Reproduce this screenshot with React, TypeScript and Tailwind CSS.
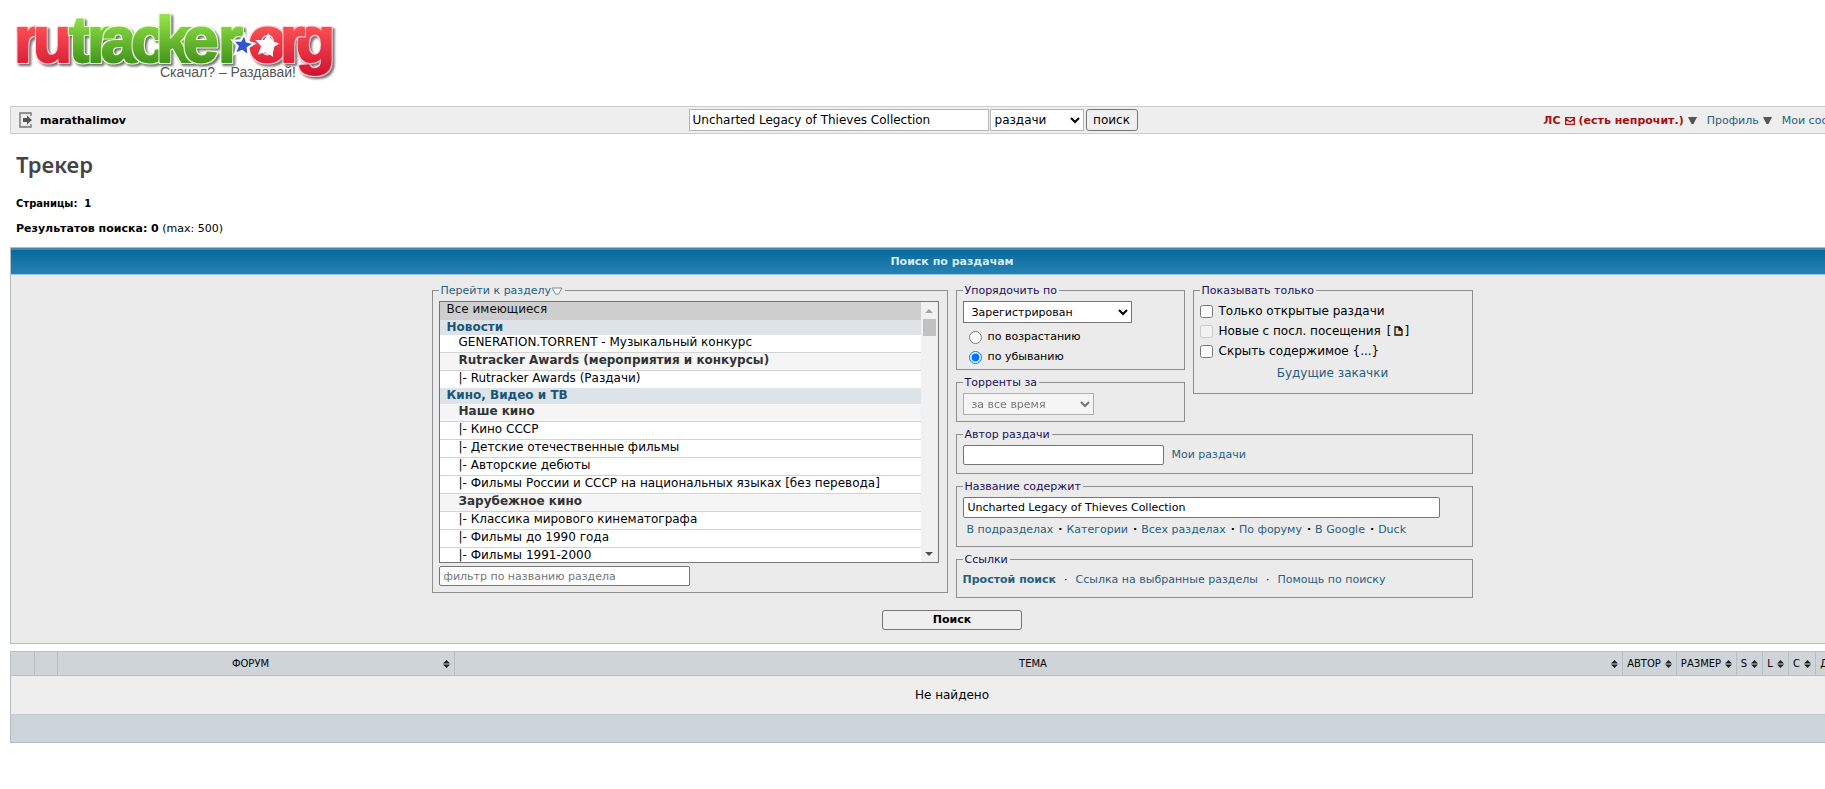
import React, { useState } from 'react';

interface ForumOption {
  name: string;
  root?: boolean;
}

interface ForumGroup {
  label: string;
  forums: ForumOption[];
}

const FORUM_GROUPS: ForumGroup[] = [
  {
    label: 'Новости',
    forums: [
      { name: 'GENERATION.TORRENT - Музыкальный конкурс' },
      { name: 'Rutracker Awards (мероприятия и конкурсы)', root: true },
      { name: '|- Rutracker Awards (Раздачи)' },
    ],
  },
  {
    label: 'Кино, Видео и ТВ',
    forums: [
      { name: 'Наше кино', root: true },
      { name: '|- Кино СССР' },
      { name: '|- Детские отечественные фильмы' },
      { name: '|- Авторские дебюты' },
      { name: '|- Фильмы России и СССР на национальных языках [без перевода]' },
      { name: 'Зарубежное кино', root: true },
      { name: '|- Классика мирового кинематографа' },
      { name: '|- Фильмы до 1990 года' },
      { name: '|- Фильмы 1991-2000' },
    ],
  },
];

const SEARCH_LINKS = ['В подразделах', 'Категории', 'Всех разделах', 'По форуму', 'В Google', 'Duck'];

// painted in this order, the last "r" lies over the "g"
const LOGO_LETTERS = [
  { x: 14, ch: 'r', color: 'red' },
  { x: 33, ch: 'u', color: 'red' },
  { x: 69, ch: 't', color: 'green' },
  { x: 87, ch: 'r', color: 'green' },
  { x: 101, ch: 'a', color: 'green' },
  { x: 131, ch: 'c', color: 'green' },
  { x: 156, ch: 'k', color: 'green' },
  { x: 183, ch: 'e', color: 'green' },
  { x: 218, ch: 'r', color: 'green' },
  { x: 248, ch: 'o', color: 'red' },
  { x: 296, ch: 'g', color: 'red' },
  { x: 280, ch: 'r', color: 'red' },
];

const STAR = 'M0 -11L3 -4L11 -3L5 2L7 10L0 6L-7 10L-5 2L-11 -3L-3 -4Z';

const Logo = () => (
  <svg width="340" height="84" viewBox="0 0 340 84" role="img" aria-label="rutracker.org">
    <defs>
      <linearGradient id="red" gradientUnits="userSpaceOnUse" x1="0" y1="26" x2="0" y2="76">
        <stop offset="0" stopColor="#fb5055" />
        <stop offset="1" stopColor="#cf1230" />
      </linearGradient>
      <linearGradient id="green" gradientUnits="userSpaceOnUse" x1="0" y1="14" x2="0" y2="64">
        <stop offset="0" stopColor="#97e54a" />
        <stop offset="1" stopColor="#41931c" />
      </linearGradient>
      {/* light rim round every letter */}
      <filter id="red-rim" x="-20%" y="-20%" width="140%" height="140%" colorInterpolationFilters="sRGB">
        <feMorphology in="SourceAlpha" operator="dilate" radius="1" result="fat" />
        <feFlood floodColor="#ffd0d8" />
        <feComposite in2="fat" operator="in" result="rim" />
        <feMerge><feMergeNode in="rim" /><feMergeNode in="SourceGraphic" /></feMerge>
      </filter>
      <filter id="green-rim" x="-20%" y="-20%" width="140%" height="140%" colorInterpolationFilters="sRGB">
        <feMorphology in="SourceAlpha" operator="dilate" radius="1" result="fat" />
        <feFlood floodColor="#eaffd6" />
        <feComposite in2="fat" operator="in" result="rim" />
        <feMerge><feMergeNode in="rim" /><feMergeNode in="SourceGraphic" /></feMerge>
      </filter>
      <filter id="shadow" x="-5%" y="-10%" width="110%" height="125%" colorInterpolationFilters="sRGB">
        <feDropShadow dx="2" dy="2" stdDeviation="1" floodColor="#333" floodOpacity=".7" />
      </filter>
    </defs>
    <g
      fontFamily="'Liberation Sans', Arial, sans-serif"
      fontWeight="700"
      fontSize="64"
      strokeWidth="2"
      strokeLinejoin="round"
      filter="url(#shadow)"
    >
      {LOGO_LETTERS.map((l, i) => (
        <text key={i} x={l.x} y={62} fill={`url(#${l.color})`} stroke={`url(#${l.color})`} filter={`url(#${l.color}-rim)`}>
          {l.ch}
        </text>
      ))}
    </g>
    <path d={STAR} transform="translate(243 45) rotate(8)" fill="#2e56d2" stroke="#fff" strokeWidth="2" />
    <path d={STAR} transform="translate(267 45) rotate(8)" fill="#fff" stroke="#fff" strokeWidth="1" />
    <text x="160" y="77" fontFamily="'Liberation Sans', Arial, sans-serif" fontSize="14" fill="#555">
      Скачал? – Раздавай!
    </text>
  </svg>
);

const LogoutIcon = () => (
  <svg width="14" height="16" viewBox="0 0 14 16" aria-hidden="true">
    <path d="M12 4V1H1v14h11v-3" fill="none" stroke="#777" strokeWidth="1.4" />
    <path d="M4 6h4V3.500L13 8l-5 4.500V10H4z" fill="#555" />
  </svg>
);

const MailIcon = () => (
  <svg width="10" height="8" viewBox="0 0 10 8" className="mx-1 inline-block" aria-hidden="true">
    <path d="M.7.7h8.600v6.600H.7zM1 2l4 3 4-3" fill="none" stroke="#a81010" strokeWidth="1.300" />
  </svg>
);

const ArrowDown = () => (
  <svg width="9" height="7" viewBox="0 0 9 7" aria-hidden="true">
    <path d="M0 0h9L5.500 7h-2z" fill="#555" />
  </svg>
);

const SortIcon = () => (
  <svg width="7" height="8" viewBox="0 0 7 8" className="mr-px ml-[3px] shrink-0" aria-hidden="true">
    <path d="M3.500 0L7 3.500H0zM0 4.500h7L3.500 8z" fill="#222" />
  </svg>
);

const Box = ({ title, className = '', children }: { title: React.ReactNode; className?: string; children: React.ReactNode }) => (
  <fieldset className={`min-w-0 border border-[#8f8f8f] pt-1 pl-1.5 ${className}`}>
    <legend className="px-0.5 text-[11px] leading-[13px] text-[#1a0f5c]">{title}</legend>
    {children}
  </fieldset>
);

const Link = ({ className = '', children }: { className?: string; children: React.ReactNode }) => (
  <a href="#" className={`text-[#275f82] ${className}`}>{children}</a>
);

const ForumSelect = () => {
  const [selected, setSelected] = useState<string[]>(['all']);

  return (
    <div className="flex h-[262px] border border-[#767676] bg-white">
      <select
        multiple
        aria-label="Раздел"
        value={selected}
        onChange={(e) => setSelected(Array.from(e.target.selectedOptions, (o) => o.value))}
        className="block h-full min-w-0 flex-1 overflow-hidden bg-white text-[12px] outline-none"
      >
        <option value="all" className="h-[18px] p-0 indent-[7px] leading-[17px]">Все имеющиеся</option>
        {FORUM_GROUPS.map((group) => (
          <optgroup
            key={group.label}
            label={group.label}
            className="bg-[#dee3e7] p-0 indent-[5px] leading-[17px] font-bold text-[#1a5478]"
          >
            {group.forums.map((forum, i) => (
              <option
                key={forum.name}
                value={forum.name}
                className={`p-0 indent-[19px] leading-[18px] ${forum.root ? 'bg-[#f5f5f5] font-bold text-[#333]' : 'bg-white font-normal text-black'} ${i < group.forums.length - 1 ? 'h-[18px] border-b border-[#d3d3d3]' : 'h-[17px]'}`}
              >
                {forum.name}
              </option>
            ))}
          </optgroup>
        ))}
      </select>
      <div className="flex w-[17px] flex-col items-center justify-between bg-[#f1f1f1] pb-[6px]" aria-hidden="true">
        <div className="flex flex-col items-center gap-[6px] pt-[7px]">
          <svg width="8" height="4" viewBox="0 0 8 4"><path d="M0 4l4-4 4 4z" fill="#a3a3a3" /></svg>
          <div className="h-[17px] w-[13px] bg-[#c1c1c1]" />
        </div>
        <svg width="8" height="4" viewBox="0 0 8 4"><path d="M0 0h8L4 4z" fill="#505050" /></svg>
      </div>
    </div>
  );
};

const TopBar = () => {
  const [query, setQuery] = useState('Uncharted Legacy of Thieves Collection');

  return (
    <div className="grid h-7 grid-cols-[36%_auto_1fr] items-center border border-[#ccc] bg-[#eee]">
      <div className="flex items-center gap-[7px] pl-2 font-bold">
        <LogoutIcon />
        <a href="#" className="pt-px text-black">marathalimov</a>
      </div>
      <form className="flex items-center gap-px text-[12px]" onSubmit={(e) => e.preventDefault()}>
        <input
          type="text"
          aria-label="Поиск"
          value={query}
          onChange={(e) => setQuery(e.target.value)}
          className="h-[22px] w-[300px] border border-[#b5b5b5] bg-white px-[3px]"
        />
        <select aria-label="Где искать" className="h-[22px] w-[94px] border border-[#b5b5b5] bg-white">
          <option>раздачи</option>
        </select>
        <button type="submit" className="ml-px h-[22px] w-[52px] rounded-[3px] border border-[#767676] bg-[#efefef]">поиск</button>
      </form>
      <nav className="flex items-center justify-end gap-1 pt-px pr-[7px] whitespace-nowrap">
        <a href="#" className="font-bold text-[#a81010]">
          ЛС<MailIcon />(есть непрочит.)
        </a>
        <ArrowDown />
        <Link className="ml-1.5">Профиль</Link>
        <ArrowDown />
        <Link className="ml-1.5">Мои сообщения</Link>
        <ArrowDown />
      </nav>
    </div>
  );
};

const SearchPanel = () => {
  const [order, setOrder] = useState('desc');
  const [title, setTitle] = useState('Uncharted Legacy of Thieves Collection');

  return (
    <form className="border border-[#b5bcc0] bg-[#ebebeb]" onSubmit={(e) => e.preventDefault()}>
      <h2 className="border-t-2 border-b border-t-[#4587a5] border-b-[#9cc7de] bg-linear-to-b from-[#04699d] to-[#2682b4] text-center text-[11px] leading-[24px] font-bold text-[#d5edf8]">
        Поиск по раздачам
      </h2>
      <div className="flex items-start justify-center gap-2 pt-[9px]">
        <Box
          className="w-[516px] pr-2 pb-1.5"
          title={
            <a href="#" className="flex items-center text-[#275f82]">
              Перейти к разделу
              <svg width="12" height="8" viewBox="0 0 12 8" aria-hidden="true">
                <path d="M1 1h10L7.500 7h-3z" fill="#fff" stroke="#7a8a94" />
              </svg>
            </a>
          }
        >
          <ForumSelect />
          <input
            type="text"
            aria-label="Фильтр разделов"
            placeholder="фильтр по названию раздела"
            className="mt-[3px] block h-5 w-[251px] rounded-[2px] border border-[#767676] bg-white px-1 placeholder:text-[#757575]"
          />
        </Box>
        <div className="flex w-[517px] flex-col gap-1.5">
          <div className="flex items-start gap-2">
            <div className="flex w-[229px] flex-col gap-1.5">
              <Box title="Упорядочить по" className="pb-0.5">
                <select aria-label="Упорядочить по" className="block h-[22px] w-[169px] border border-[#767676] bg-white px-1">
                  <option>Зарегистрирован</option>
                </select>
                <label className="mt-1 flex h-5 items-center gap-1.5 pl-1.5">
                  <input type="radio" name="order" className="m-0 size-[13px]" checked={order === 'asc'} onChange={() => setOrder('asc')} />
                  по возрастанию
                </label>
                <label className="flex h-5 items-center gap-1.5 pl-1.5">
                  <input type="radio" name="order" className="m-0 size-[13px]" checked={order === 'desc'} onChange={() => setOrder('desc')} />
                  по убыванию
                </label>
              </Box>
              <Box title="Торренты за" className="pb-1.5">
                <select aria-label="Торренты за" disabled className="block h-[22px] w-[131px] border border-[#767676] bg-white px-1 opacity-50">
                  <option>за все время</option>
                </select>
              </Box>
            </div>
            <Box title="Показывать только" className="flex-1 pr-1.5 pb-2.5 text-[12px] leading-[20px]">
              <label className="flex items-center gap-1.5">
                <input type="checkbox" className="m-0 size-[13px]" />
                Только открытые раздачи
              </label>
              <label className="flex items-center gap-1.5">
                <input type="checkbox" className="m-0 size-[13px]" disabled />
                Новые с посл. посещения
                <span className="flex items-center">
                  [
                  <svg width="9" height="10" viewBox="0 0 9 10" className="mx-0.5" aria-hidden="true">
                    <path d="M1 1h4.500L8 3.500V9H1zM5 1v3h3" fill="#fbd9a8" stroke="#111" strokeWidth="1.300" />
                  </svg>
                  ]
                </span>
              </label>
              <label className="flex items-center gap-1.5">
                <input type="checkbox" className="m-0 size-[13px]" />
                {'Скрыть содержимое {...}'}
              </label>
              <p className="mt-0.5 text-center"><Link>Будущие закачки</Link></p>
            </Box>
          </div>
          <Box title="Автор раздачи" className="pb-2">
            <div className="flex items-center gap-2">
              <input type="text" aria-label="Автор раздачи" className="h-5 w-[201px] rounded-[2px] border border-[#767676] bg-white px-1" />
              <Link>Мои раздачи</Link>
            </div>
          </Box>
          <Box title="Название содержит" className="pb-1.5">
            <input
              type="text"
              aria-label="Название содержит"
              value={title}
              onChange={(e) => setTitle(e.target.value)}
              className="block h-[21px] w-[477px] rounded-[2px] border border-[#767676] bg-white px-1"
            />
            <p className="mt-0.5 pl-1 leading-[20px]">
              {SEARCH_LINKS.map((link, i) => (
                <React.Fragment key={link}>
                  {i > 0 && <b className="pr-1 pl-[5px]">·</b>}
                  <Link>{link}</Link>
                </React.Fragment>
              ))}
            </p>
          </Box>
          <Box title="Ссылки" className="pb-[7px]">
            <p className="leading-[20px]">
              <Link className="font-bold">Простой поиск</Link>
              <span className="px-2">·</span>
              <Link>Ссылка на выбранные разделы</Link>
              <span className="px-2">·</span>
              <Link>Помощь по поиску</Link>
            </p>
          </Box>
        </div>
      </div>
      <div className="pt-3 pb-[13px] text-center">
        <button type="submit" className="h-5 w-[140px] rounded-[3px] border border-[#767676] bg-[#efefef] font-bold">Поиск</button>
      </div>
    </form>
  );
};

const COLUMNS = [
  { name: '', width: 'w-6' },
  { name: '', width: 'w-[23px]' },
  { name: 'Форум', width: 'w-[397px]' },
  { name: 'Тема', width: '' },
  { name: 'Автор', width: 'w-[54px]' },
  { name: 'Размер', width: 'w-[60px]' },
  { name: 'S', width: 'w-[26px]' },
  { name: 'L', width: 'w-[26px]' },
  { name: 'C', width: 'w-[27px]' },
  { name: 'Добавлен', width: 'w-[78px]' },
];

const ResultsTable = () => (
  <table className="mt-[7px] w-full table-fixed border-collapse border border-[#b5bcc0]">
    <thead>
      <tr className="h-6 bg-[#cfd4d8] text-[10px] uppercase">
        {COLUMNS.map((col, i) => (
          <th key={i} className={`border border-[#b5bfc4] p-0 px-[3px] font-normal ${col.width}`}>
            {col.name && (
              <span className="flex items-center">
                <span className="flex-1 text-center">{col.name}</span>
                <SortIcon />
              </span>
            )}
          </th>
        ))}
      </tr>
    </thead>
    <tbody>
      <tr className="h-[39px] bg-[#eee]">
        <td colSpan={10} className="text-center text-[12px]">Не найдено</td>
      </tr>
    </tbody>
    <tfoot>
      <tr className="h-7 border-t border-[#c5cdd0] bg-[#cdd3da]">
        <td colSpan={10} />
      </tr>
    </tfoot>
  </table>
);

const App: React.FC = () => (
  <div className="overflow-x-hidden bg-white font-['DejaVu_Sans',Verdana,sans-serif] text-[11px] leading-[14px] text-black">
    <div className="ml-2.5 w-[calc(100%+59px)]">
      <header className="-ml-2.5 h-[106px]">
        <a href="#" className="inline-block"><Logo /></a>
      </header>
      <TopBar />
      <main>
        <h1 className="pt-[15px] pl-1.5 font-['Noto_Sans',sans-serif] text-[22px] leading-[30px] font-semibold text-[#444]">Трекер</h1>
        <p className="mt-[18px] pl-1.5 text-[10px] font-bold">Страницы:&nbsp; 1</p>
        <p className="mt-[11px] mb-[11px] pl-1.5"><b>Результатов поиска: 0</b> (max: 500)</p>
        <SearchPanel />
        <ResultsTable />
      </main>
    </div>
  </div>
);

export default App;
